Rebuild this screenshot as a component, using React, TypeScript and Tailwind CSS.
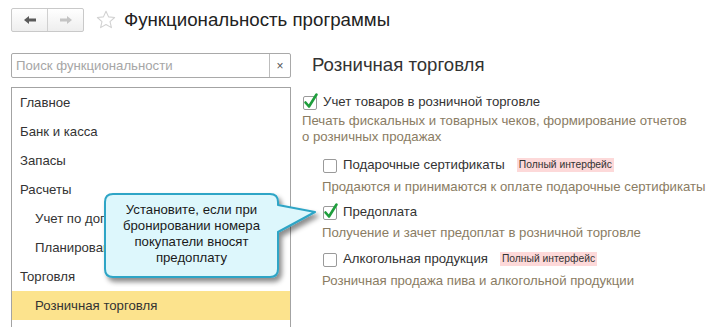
import React from "react";

function Check({ checked }: { checked: boolean }) {
  return (
    <svg width="18" height="18" viewBox="0 0 18 18" className="shrink-0 overflow-visible">
      <rect x="1.5" y="3.5" width="13" height="13" rx="1.5" fill="#fff" stroke="#9a9a9a" />
      {checked && (
        <path d="M3.5 9.5 L7 13.5 L14.5 1.5" fill="none" stroke="#1e9e3c" strokeWidth="2.6" strokeLinecap="round" strokeLinejoin="round" />
      )}
    </svg>
  );
}

function Badge() {
  return (
    <span className="ml-[9px] bg-[#fdd9d9] text-[#333] text-[10.3px] leading-[14px] px-[2px]">Полный интерфейс</span>
  );
}

function Row({ checked, label, badge, className }: { checked: boolean; label: string; badge?: boolean; className?: string }) {
  return (
    <div className={"flex items-center h-[20px] gap-[3px] " + (className ?? "")}>
      <Check checked={checked} />
      <span className="text-[13.2px] text-[#333]">{label}</span>
      {badge && <Badge />}
    </div>
  );
}

export default function App() {
  const items: { t: string; sub?: boolean; active?: boolean }[] = [
    { t: "Главное" },
    { t: "Банк и касса" },
    { t: "Запасы" },
    { t: "Расчеты" },
    { t: "Учет по договорам", sub: true },
    { t: "Планирование", sub: true },
    { t: "Торговля" },
    { t: "Розничная торговля", sub: true, active: true },
  ];
  return (
    <div className="relative w-[720px] h-[327px] overflow-hidden bg-white text-[#333] font-['Liberation_Sans',Arial,sans-serif]">
      {/* header */}
      <div className="flex items-center h-[40px] pl-[11px]">
        <div className="flex w-[73px] h-[24px] border border-[#c9c9c9] rounded-[2px] bg-gradient-to-b from-white to-[#eeeeee]">
          <div className="flex-1 flex items-center justify-center border-r border-[#d0d0d0]">
            <svg width="14" height="10" viewBox="0 0 14 10">
              <path d="M1 5 L6 1 L6 3.6 L13 3.6 L13 6.4 L6 6.4 L6 9 Z" fill="#5a5a5a" />
            </svg>
          </div>
          <div className="flex-1 flex items-center justify-center">
            <svg width="14" height="10" viewBox="0 0 14 10">
              <path d="M13 5 L8 1 L8 3.6 L1 3.6 L1 6.4 L8 6.4 L8 9 Z" fill="#c4c4c4" />
            </svg>
          </div>
        </div>
        <svg width="22" height="22" viewBox="0 0 24 24" className="ml-[11px]">
          <path d="M12 2.5 L14.8 8.6 L21.4 9.3 L16.4 13.7 L17.9 20.3 L12 16.9 L6.1 20.3 L7.6 13.7 L2.6 9.3 L9.2 8.6 Z" fill="none" stroke="#d2d2d2" strokeWidth="1.2" strokeLinejoin="round" />
        </svg>
        <div className="ml-[7px] text-[18.7px] leading-[24px] text-[#222]">Функциональность программы</div>
      </div>

      {/* body */}
      <div className="flex mt-[13px]">
        <div className="ml-[11px] w-[280px] flex flex-col">
          <div className="flex h-[25px] border border-[#a9a9a9] rounded-[2px]">
            <div className="flex-1 flex items-center pl-[4px] text-[13.2px] text-[#a6a6a6]">Поиск функциональности</div>
            <div className="w-[21px] flex items-center justify-center border-l border-[#bdbdbd] text-[12px] text-[#555]">×</div>
          </div>
          <div className="mt-[9px] h-[260px] border border-[#a3a3a3] border-b-0">
            {items.map((it) => (
              <div
                key={it.t}
                className={
                  "h-[29px] flex items-center text-[13.2px] text-[#333] whitespace-nowrap overflow-hidden " +
                  (it.sub ? "pl-[23px] " : "pl-[8px] ") +
                  (it.active ? "bg-[#fce38d]" : "")
                }
              >
                {it.t}
              </div>
            ))}
          </div>
        </div>

        <div className="ml-[11px] flex flex-col">
          <div className="text-[18.6px] leading-[24px] text-[#333] ml-[10px]">Розничная торговля</div>
          <Row checked label="Учет товаров в розничной торговле" className="mt-[15px]" />
          <div className="mt-[1px] text-[13.2px] leading-[16px] text-[#8a7c63]">
            Печать фискальных и товарных чеков, формирование отчетов
            <br />о розничных продажах
          </div>
          <div className="pl-[20px] flex flex-col">
            <Row checked={false} label="Подарочные сертификаты" badge className="mt-[10px]" />
            <div className="mt-[4px] text-[13.2px] leading-[16px] text-[#8a7c63]">Продаются и принимаются к оплате подарочные сертификаты</div>
            <Row checked label="Предоплата" className="mt-[7px]" />
            <div className="mt-[3px] text-[13.2px] leading-[16px] text-[#8a7c63]">Получение и зачет предоплат в розничной торговле</div>
            <Row checked={false} label="Алкогольная продукция" badge className="mt-[8px]" />
            <div className="mt-[4px] text-[13.2px] leading-[16px] text-[#8a7c63]">Розничная продажа пива и алкогольной продукции</div>
          </div>
        </div>
      </div>

      {/* callout */}
      <div className="absolute left-[100px] top-[189px] w-[225px] h-[98px]">
        <svg width="225" height="98" viewBox="0 0 225 98" className="absolute left-0 top-0">
          <defs>
            <filter id="sh" x="-10%" y="-10%" width="130%" height="140%">
              <feDropShadow dx="3" dy="4" stdDeviation="2.5" floodColor="#000" floodOpacity="0.45" />
            </filter>
          </defs>
          <path
            d="M13 5 H170 Q178 5 178 13 V16 L215 23 L178 43 V80 Q178 88 170 88 H13 Q5 88 5 80 V13 Q5 5 13 5 Z"
            fill="#ddf7fc"
            stroke="#2ea5c6"
            strokeWidth="2"
            strokeLinejoin="round"
            filter="url(#sh)"
          />
        </svg>
        <div className="absolute left-[5px] top-[13px] w-[173px] text-center text-[13.2px] leading-[16px] text-[#1a1a1a]">
          Установите, если при
          <br />
          бронировании номера
          <br />
          покупатели вносят
          <br />
          предоплату
        </div>
      </div>
    </div>
  );
}
